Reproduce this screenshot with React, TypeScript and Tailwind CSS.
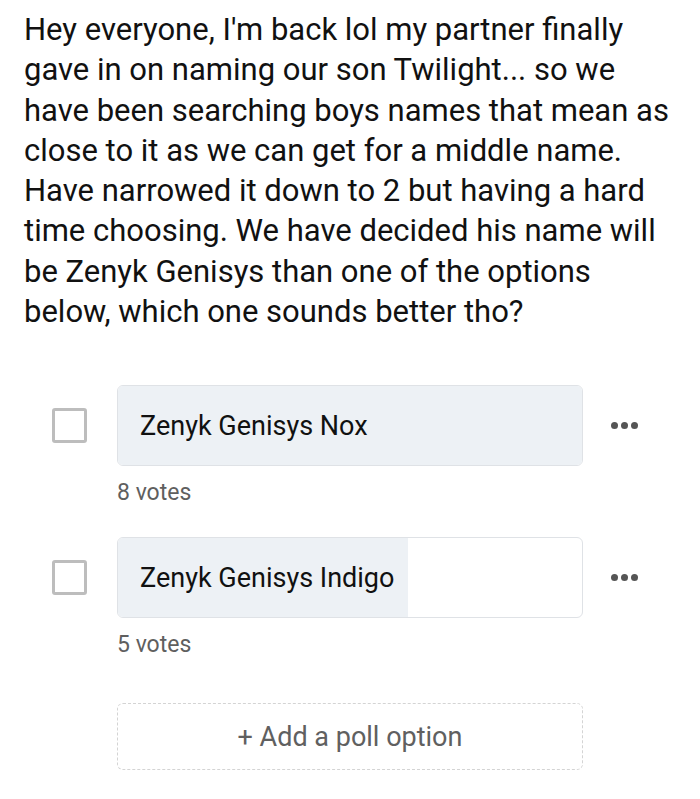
import React from 'react';

const lines = [
  'Hey everyone, I\'m back lol my partner finally',
  'gave in on naming our son Twilight... so we',
  'have been searching boys names that mean as',
  'close to it as we can get for a middle name.',
  'Have narrowed it down to 2 but having a hard',
  'time choosing. We have decided his name will',
  'be Zenyk Genisys than one of the options',
  'below, which one sounds better tho?',
];

const options = [
  { label: 'Zenyk Genisys Nox', votes: 8 },
  { label: 'Zenyk Genisys Indigo', votes: 5 },
];

const maxVotes = Math.max(...options.map((o) => o.votes));

const Dots = () => (
  <div className="flex items-center gap-[3px] ml-[28px]">
    <span className="w-[7px] h-[7px] rounded-full bg-[#555]" />
    <span className="w-[7px] h-[7px] rounded-full bg-[#555]" />
    <span className="w-[7px] h-[7px] rounded-full bg-[#555]" />
  </div>
);

export default function App() {
  return (
    <div className="w-[700px] h-[799px] bg-white overflow-hidden font-['Roboto','Liberation_Sans',sans-serif]">
      <div className="pl-[24px] pt-[10px] text-[31px] leading-[40.3px] text-[#111]">
        {lines.map((l) => (
          <div key={l} className="whitespace-nowrap">{l}</div>
        ))}
      </div>

      <div className="pl-[52px] mt-[53px]">
        {options.map((o, i) => (
          <div key={o.label} className={i > 0 ? 'mt-[31px]' : ''}>
            <div className="flex items-center">
              <div className="w-[35px] h-[35px] border-[3px] border-[#bdbdbd] rounded-[3px]" />
              <div className="relative ml-[30px] w-[466px] h-[81px] rounded-[6px] border border-[#dfe2e6] bg-white overflow-hidden">
                <div
                  className="absolute inset-y-0 left-0 bg-[#edf1f5]"
                  style={{ width: `${(o.votes / maxVotes) * 100}%` }}
                />
                <div className="relative h-full flex items-center pl-[22px] text-[27px] text-[#111]">
                  {o.label}
                </div>
              </div>
              <Dots />
            </div>
            <div className="ml-[65px] mt-[14px] text-[23px] leading-[26px] text-[#5f5f5f]">
              {o.votes} votes
            </div>
          </div>
        ))}

        <div className="ml-[65px] mt-[45px] w-[466px] h-[67px] rounded-[6px] border border-dashed border-[#d4d4d4] flex items-center justify-center text-[27px] text-[#606060]">
          + Add a poll option
        </div>
      </div>
    </div>
  );
}
